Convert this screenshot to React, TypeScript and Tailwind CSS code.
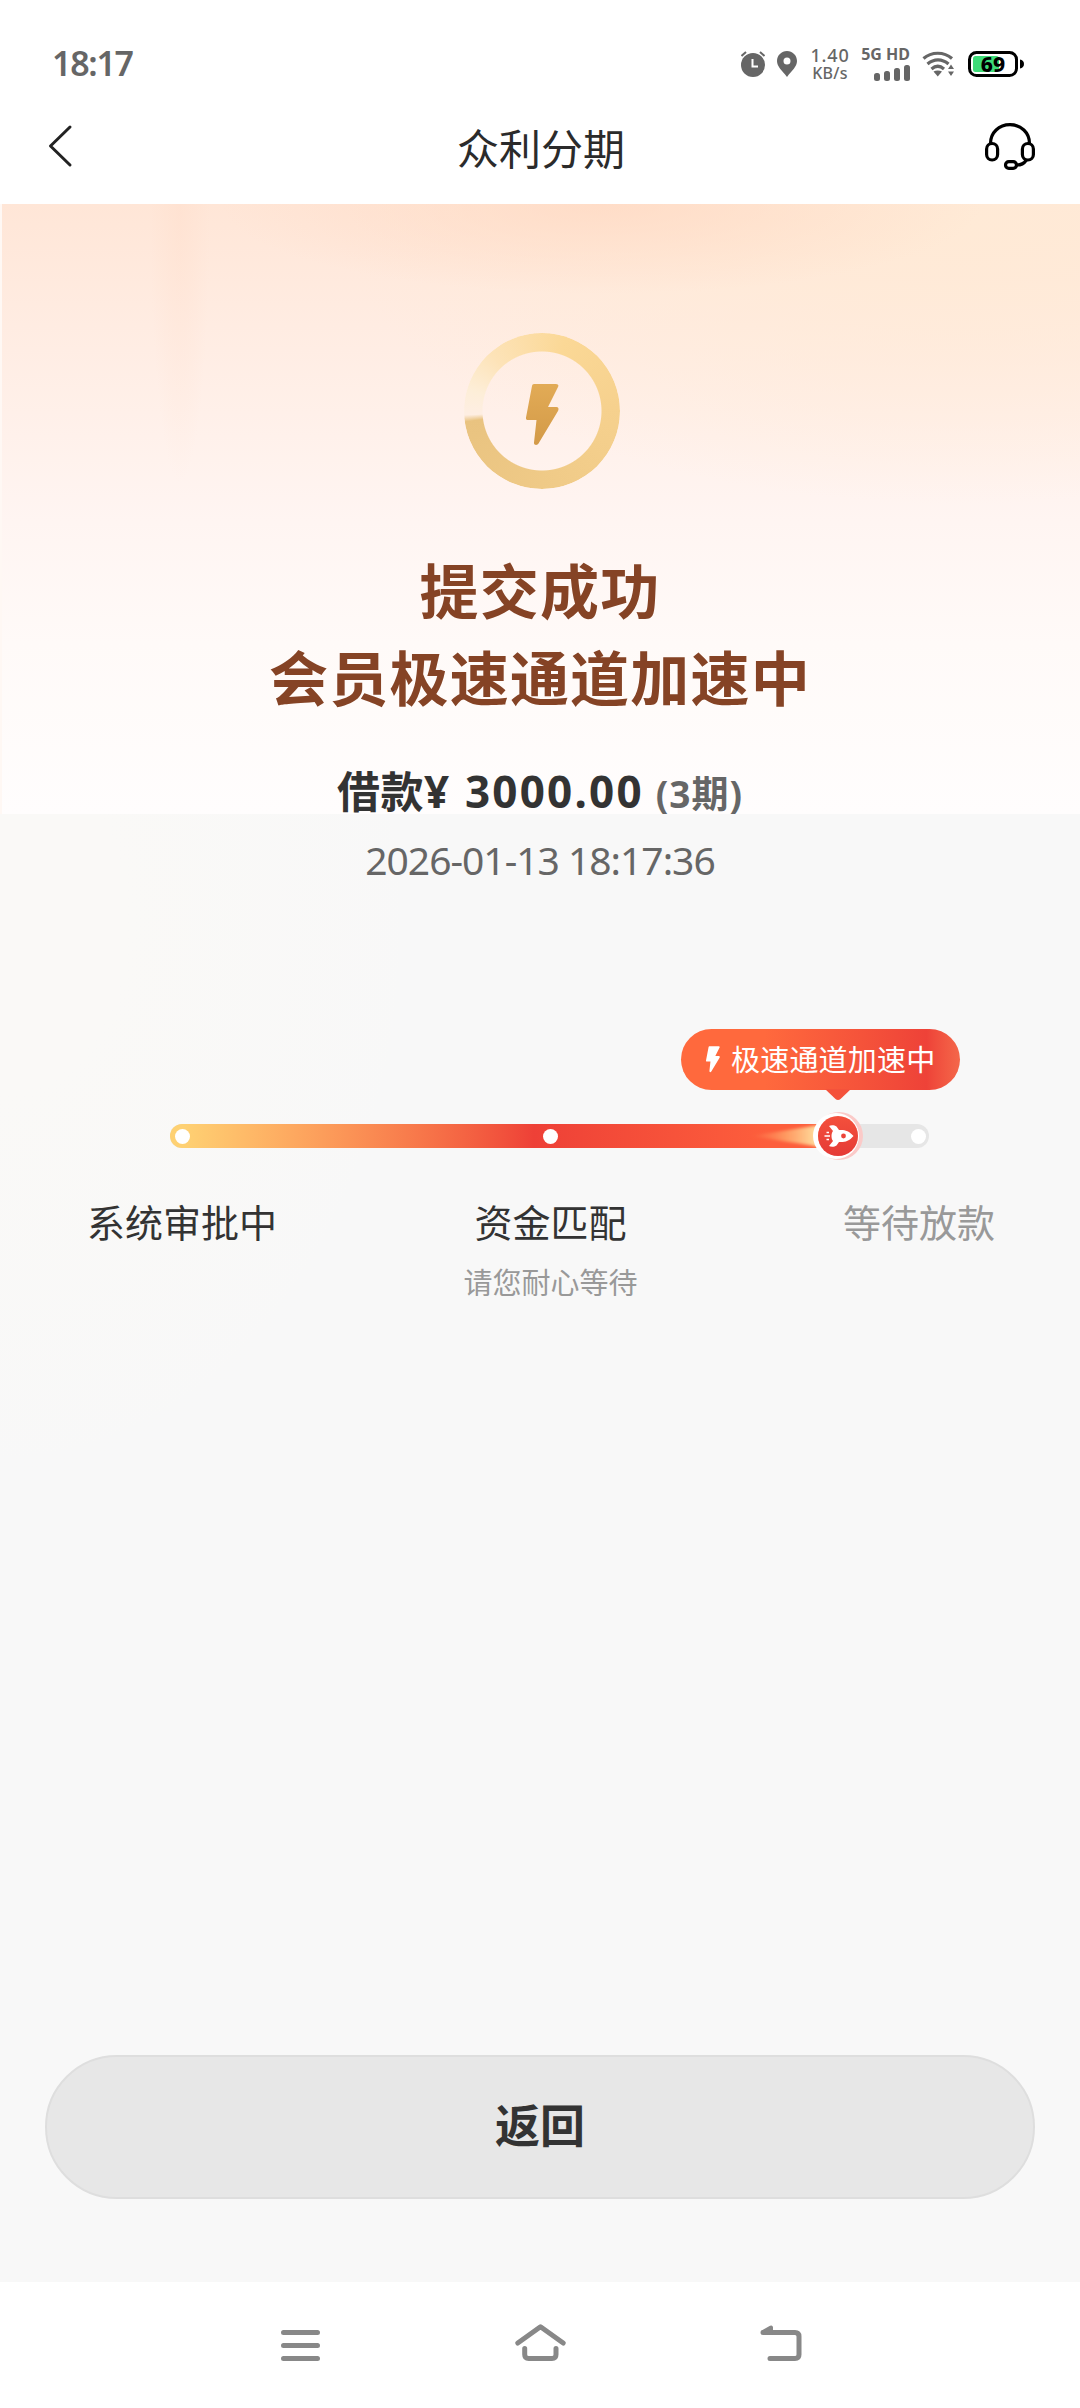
import { useState } from "react";

interface Step {
  label: string;
  hint?: string;
  active: boolean;
}

interface Loan {
  amount: string;
  periods: number;
  submittedAt: string;
}

const steps: Step[] = [
  { label: "系统审批中", active: true },
  { label: "资金匹配", hint: "请您耐心等待", active: true },
  { label: "等待放款", active: false },
];

const BOLT_PATH =
  "M8 0H30C32 0 33 1.500 32 3L22 23H30.500C32.500 23 33 25 32 27L12.500 59.500C11 62 7.500 61 8 58.500L10.500 36H2C0.500 36 -0.300 35 0 33.500L6 2C6.200 0.700 7 0 8 0Z";

function Battery({ level }: { level: number }) {
  return (
    <div className="relative w-14 h-[26px] ml-[13px]">
      <svg width="56" height="26" viewBox="0 0 56 26">
        <rect x="5" y="5" width="26" height="16" rx="2.500" fill="#3ddc78" />
        <rect x="1.500" y="1.500" width="47" height="23" rx="7" fill="none" stroke="#000" strokeWidth="3" />
        <path d="M52 8.500C54.500 9 56 10.500 56 13C56 15.500 54.500 17 52 17.500Z" fill="#000" />
      </svg>
      <span className="absolute inset-y-0 left-0 w-[50px] text-center text-[21px] leading-[26px] font-extrabold text-black font-['Noto_Sans',sans-serif]">
        {level}
      </span>
    </div>
  );
}

function StatusBar() {
  return (
    <div className="h-24 pt-8 pl-[52px] pr-14 flex items-center justify-between text-[#666]">
      <div className="pb-[2px] text-[34px] leading-[34px] font-semibold tracking-[-1.3px] font-['Noto_Sans',sans-serif]">18:17</div>
      <div className="flex items-center">
        <svg width="24" height="26" viewBox="0 0 24 26">
          <circle cx="12" cy="14" r="12" fill="#666" />
          <path d="M0.500 5L5 1M23.500 5L19 1" stroke="#666" strokeWidth="2" />
          <path d="M11.500 8V15.500H17" stroke="#fff" strokeWidth="2" fill="none" />
        </svg>
        <svg width="20" height="26" viewBox="0 0 20 26" className="ml-3">
          <path
            d="M10 0C4.500 0 0 4.400 0 10C0 16 5 19 10 26C15 19 20 16 20 10C20 4.400 15.500 0 10 0ZM10 13.500A3.500 3.500 0 1 1 10 6.500A3.500 3.500 0 0 1 10 13.500Z"
            fill="#666"
          />
        </svg>
        <div className="w-[42px] ml-[12px] flex flex-col items-center whitespace-nowrap font-medium font-['Noto_Sans',sans-serif]">
          <div className="text-[18px] leading-[18px] tracking-[0.8px]">1.40</div>
          <div className="text-[16px] leading-[18px] tracking-[0.3px]">KB/s</div>
        </div>
        <div className="w-12 ml-[11px] flex flex-col items-end font-['Noto_Sans',sans-serif]">
          <div className="text-[16px] leading-[15px] pb-[3px] font-bold whitespace-nowrap">5G HD</div>
          <svg width="36" height="16" viewBox="0 0 36 16" fill="#666">
            <rect x="0" y="8" width="6" height="8" rx="2.500" />
            <rect x="10" y="6" width="6" height="10" rx="2.500" />
            <rect x="20" y="3" width="6" height="13" rx="2.500" />
            <rect x="30" y="0" width="6" height="16" rx="2.500" />
          </svg>
        </div>
        <svg width="33" height="26" viewBox="0 0 33 26" className="ml-3" fill="none" stroke="#666" strokeWidth="3.200">
          <path d="M1.500 7.500C9.500 0.500 22 0.500 30 7.500" />
          <path d="M5.500 13C12 7.500 20 7.500 26.500 13" />
          <path d="M9.500 18C13.500 14.500 18 14.500 22 18" />
          <path d="M11.500 20.500C14 19 17.500 19 20 20.500L15.750 25.500Z" fill="#666" stroke="none" />
          <path d="M26 18L29 13.500L32 18ZM26 20.500H32L29 25Z" fill="#666" stroke="none" />
        </svg>
        <Battery level={69} />
      </div>
    </div>
  );
}

function Header({ title }: { title: string }) {
  return (
    <div className="h-[108px] pb-2 pl-[47px] pr-[45px] flex items-center justify-between">
      <button className="w-[50px]">
        <svg width="26" height="44" viewBox="0 0 26 44" fill="none" stroke="#222" strokeWidth="3" strokeLinecap="round" strokeLinejoin="round">
          <path d="M23 3L3.500 22L23 41" />
        </svg>
      </button>
      <h1 className="pt-[2px] text-[42px] leading-[60px] text-[#2b2b2b]">{title}</h1>
      <button className="w-[50px]">
        <svg width="50" height="47" viewBox="0 0 50 47" fill="none" stroke="#000" strokeWidth="3.200" strokeLinecap="round">
          <path d="M5.500 20.500C5.500 9.500 14 1.700 25 1.700S44.500 9.500 44.500 20.500" />
          <rect x="1.600" y="20.500" width="11" height="16.500" rx="5.500" />
          <rect x="37.400" y="20.500" width="11" height="16.500" rx="5.500" />
          <rect x="20.500" y="38.700" width="11" height="6.700" rx="3.300" />
          <path d="M41 37.500C39 40.500 36 42 32 42" />
        </svg>
      </button>
    </div>
  );
}

function SuccessRing() {
  return (
    <div className="relative w-[156px] h-[156px] ml-1 flex items-center justify-center">
      <div className="absolute inset-0 rounded-full bg-[conic-gradient(from_268deg,#feeee2_0deg,#fdeed8_18deg,#fde3b8_50deg,#fbd896_110deg,#f6d18e_180deg,#f0cb88_260deg,#e9c380_354deg,#feeee2_359deg)] [mask-image:radial-gradient(circle,transparent_59px,#000_60px)]" />
      <svg width="33" height="62" viewBox="0 0 33 62" className="mt-[7px]">
        <defs>
          <linearGradient id="bolt" x1="0" y1="0" x2="0" y2="1">
            <stop offset="0" stopColor="#e2ab56" />
            <stop offset="1" stopColor="#d39a48" />
          </linearGradient>
        </defs>
        <path d={BOLT_PATH} fill="url(#bolt)" />
      </svg>
    </div>
  );
}

function Rocket() {
  return (
    <div className="absolute left-[648px] -top-2 w-10 h-10 rounded-full bg-linear-to-b from-[#f4503c] to-[#e53a36] shadow-[-2px_0_0_3px_#fff,1px_0_0_4px_#fbcac8] flex items-center justify-center">
      <svg width="40" height="40" viewBox="-20 -20 40 40">
        <path
          d="M15.500 0C11 -5.500 6 -6.500 1 -6L-1.500 -9.500C-3.500 -11 -7 -11.200 -9 -10L-5 -5C-7 -3 -7 3 -5 5L-9 10C-7 11.200 -3.500 11 -1.500 9.500L1 6C6 6.500 11 5.500 15.500 0Z"
          fill="#fff"
        />
        <circle cx="5.500" cy="0" r="2.400" fill="#ec4439" />
        <path d="M-13.500 0H-8M-11.500 -3.500H-9M-11.500 3.500H-9" stroke="#fff" strokeWidth="1.600" />
      </svg>
    </div>
  );
}

function Progress() {
  return (
    <div className="w-full mt-[145px]">
      <div className="relative w-[279px] h-[61px] ml-[681px] pl-[25px] rounded-full flex items-center bg-linear-to-r from-[#ff693d] from-30% via-[#ee4238] via-88% to-[#f4674a] text-white">
        <svg width="14" height="27" viewBox="0 0 33 62">
          <path d={BOLT_PATH} fill="#fff" />
        </svg>
        <span className="ml-[11px] pb-[3px] text-[29px] leading-[55px] tracking-[0.2px] whitespace-nowrap">极速通道加速中</span>
        <svg width="26" height="12" viewBox="0 0 26 12" className="absolute left-[144px] top-[60px]">
          <path d="M0 0H26L15.500 10C14 11.300 12 11.300 10.500 10Z" fill="#f4523b" />
        </svg>
      </div>

      <div className="relative w-[759px] h-6 mt-[34px] ml-[170px] rounded-full bg-[#e6e6e6]">
        <div className="w-[650px] h-6 rounded-l-full bg-linear-to-r from-[#fed173] from-2% via-[#ee4037] via-56% to-[#fd5e3c] to-92% flex justify-end">
          <svg width="70" height="24" viewBox="0 0 70 24">
            <defs>
              <linearGradient id="flame" x1="0" y1="0" x2="1" y2="0">
                <stop offset="0" stopColor="#ff8a55" stopOpacity="0" />
                <stop offset="0.500" stopColor="#ffab6c" stopOpacity="0.750" />
                <stop offset="1" stopColor="#ffe7a6" />
              </linearGradient>
              <filter id="flameBlur">
                <feGaussianBlur stdDeviation="1.500" />
              </filter>
            </defs>
            <path d="M0 12C25 8 45 5 70 1V23C45 19 25 16 0 12Z" fill="url(#flame)" filter="url(#flameBlur)" />
          </svg>
        </div>
        <div className="absolute inset-0 pl-[5px] pr-[3px] flex items-center justify-between">
          {steps.map((step) => (
            <span key={step.label} className="w-[15px] h-[15px] rounded-full bg-white" />
          ))}
        </div>
        <Rocket />
      </div>

      <div className="mt-[49px] pl-[87px] pr-[66px] flex justify-between">
        {steps.map((step) => (
          <div key={step.label} className="w-[190px] flex flex-col items-center whitespace-nowrap">
            <div className={`text-[38px] leading-[48px] ${step.active ? "text-[#333]" : "text-[#999]"}`}>{step.label}</div>
            {step.hint && <div className="mt-[18px] text-[29px] leading-9 text-[#999]">{step.hint}</div>}
          </div>
        ))}
      </div>
    </div>
  );
}

function NavBar() {
  return (
    <div className="h-[126px] pb-[5px] bg-white flex items-center justify-center gap-[189px]">
      <svg width="51" height="37" viewBox="0 0 51 37" fill="none" stroke="#888" strokeWidth="5" strokeLinecap="round">
        <path d="M8.500 8.500H42.500M8.500 21.500H42.500M8.500 34.500H42.500" />
      </svg>
      <svg width="51" height="37" viewBox="0 0 51 37" fill="none" stroke="#888" strokeWidth="5" strokeLinecap="round" strokeLinejoin="round">
        <path d="M2.800 19L25.500 2.800L48.200 19" />
        <path d="M9.700 24.500V30.500Q9.700 34.500 13.700 34.500H37Q41 34.500 41 30.500V24.500" />
      </svg>
      <svg width="51" height="37" viewBox="0 0 51 37" fill="none" stroke="#888" strokeWidth="5" strokeLinecap="round" strokeLinejoin="round">
        <path d="M8 8.500H40Q44 8.500 44 12.500V30.500Q44 34.500 40 34.500H15" />
        <path d="M8 8L16 3.500V8.500Z" strokeWidth="4" fill="#888" />
      </svg>
    </div>
  );
}

export default function App() {
  const [loan] = useState<Loan>({
    amount: "3000.00",
    periods: 3,
    submittedAt: "2026-01-13 18:17:36",
  });

  return (
    <div className="w-[1080px] h-[2408px] bg-white flex flex-col font-['Noto_Sans_CJK_SC',sans-serif]">
      <StatusBar />
      <Header title="众利分期" />

      <div className="flex-1 relative flex flex-col items-center bg-[#f8f8f8] bg-[radial-gradient(ellipse_420px_560px_at_0px_720px,#faf9f7_0%,#faf9f7_30%,transparent_100%)]">
        {/* warm glow behind the result, ends in a hard edge */}
        <div className="absolute inset-x-0 top-0 h-[610px] border-l-2 border-[#fff8f4] bg-[radial-gradient(ellipse_380px_90px_at_600px_0px,#ffd8c1b0_0%,transparent_100%),radial-gradient(ellipse_620px_280px_at_960px_20px,#ffead6_0%,transparent_100%),radial-gradient(ellipse_30px_280px_at_178px_0px,#ffdac650_0%,transparent_100%),linear-gradient(180deg,#ffe6d7_0%,#ffece2_20%,#fff1eb_38%,#fff5f2_52%,#fffaf8_72%,#fffdfd_100%)]" />

        <div className="relative w-full flex-1 pt-[129px] pb-[83px] flex flex-col items-center">
          <SuccessRing />
          <h2 className="mt-14 text-[59px] leading-[87px] tracking-[1.2px] font-bold text-[#854325] text-center">
            提交成功
            <br />
            会员极速通道加速中
          </h2>

          <div className="mt-10 h-[60px] flex items-baseline leading-[60px] font-bold text-[#333] whitespace-nowrap">
            <span className="text-[43px] tracking-[0.5px]">借款</span>
            <span className="text-[44px] tracking-[2.2px] font-['Noto_Sans',sans-serif]">¥&nbsp;{loan.amount}</span>
            <span className="ml-3 text-[37px] tracking-[1px] text-[#666] font-['Noto_Sans','Noto_Sans_CJK_SC',sans-serif]">({loan.periods}期)</span>
          </div>
          <div className="mt-4 mb-[-1px] text-[39px] leading-[50px] tracking-[-1px] text-[#666] font-['Noto_Sans',sans-serif]">
            {loan.submittedAt}
          </div>

          <Progress />

          <button className="mt-auto w-[990px] h-[144px] pb-1.5 rounded-full border-2 border-[#dedede] bg-[#e7e7e7] text-[45px] font-bold text-[#333]">
            返回
          </button>
        </div>
      </div>

      <NavBar />
    </div>
  );
}
